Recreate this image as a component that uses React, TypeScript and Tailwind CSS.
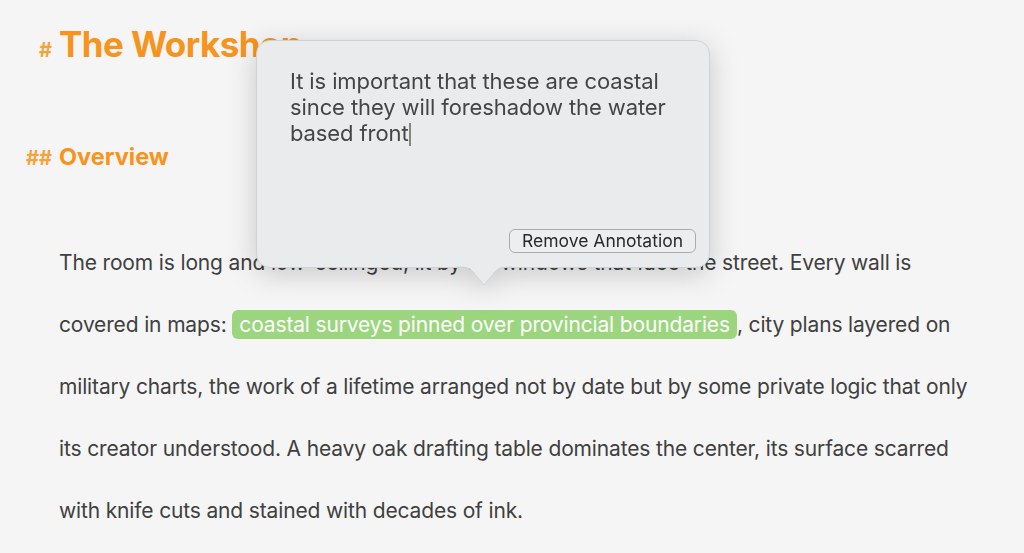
import React from "react";

export default function App() {
  const font = { fontFamily: "Inter, 'Noto Sans', sans-serif" } as React.CSSProperties;
  return (
    <div className="relative w-[1024px] h-[553px] overflow-hidden bg-[#f5f5f5] text-[#404040]" style={font}>
      <div className="pt-[22px]">
        <div className="flex items-baseline">
          <span className="w-[59px] shrink-0 pr-[7px] text-right text-[20px] font-bold text-[#f5a33a]">#</span>
          <h1 className="text-[35px] font-bold leading-[44px] text-[#f7941d] tracking-[-0.6px]">The Workshop</h1>
        </div>
        <div className="mt-[76px] flex items-baseline">
          <span className="w-[59px] shrink-0 pr-[7px] text-right text-[20px] font-bold text-[#f5a33a]">##</span>
          <h2 className="text-[23.5px] font-bold leading-[30px] text-[#f7941d]">Overview</h2>
        </div>
        <p className="mt-[59px] w-[990px] pl-[59px] pr-[10px] text-[21px] leading-[62px] tracking-[-0.15px]">
          The room is long and low-ceilinged, lit by tall windows that face the street. Every wall is covered in maps:{" "}
          <span className="rounded-[6px] bg-[#9bd67e] px-[7px] py-[2px] text-white">coastal surveys pinned over provincial boundaries</span>
          , city plans layered on military charts, the work of a lifetime arranged not by date but by some private logic that only its creator understood. A heavy oak drafting table dominates the center, its surface scarred with knife cuts and stained with decades of ink.
        </p>
      </div>

      <div className="absolute left-[256px] top-[40px] w-[454px] h-[228px] drop-shadow-[0_6px_14px_rgba(0,0,0,0.18)]">
        <div className="relative flex h-full flex-col rounded-[14px] border border-[#cfd1d3] bg-[#e9ebed] pl-[33px] pr-[34px] pt-[27px] pb-[14px]">
          <div className="text-[22px] leading-[26px] text-[#454545] tracking-[-0.1px]">
            It is important that these are coastal since they will foreshadow the water based front
            <span className="ml-[1px] inline-block h-[23px] w-[2px] bg-[#8a857c] align-[-5px]"></span>
          </div>
          <div className="mt-auto flex justify-end">
            <button className="-mr-[21px] rounded-[6px] border border-[#a9abad] bg-[#eceef0] px-[12px] h-[24px] text-[17.5px] leading-[20px] text-[#2a2a2a]">
              Remove Annotation
            </button>
          </div>
          <svg className="absolute left-[199px] -bottom-[20px]" width="56" height="21" viewBox="0 0 56 21">
            <path d="M0 0 C10 0 14 2 18 7 L28 19 L38 7 C42 2 46 0 56 0 Z" fill="#e9ebed" />
            <path d="M0 0.5 C10 0.5 14 2 18 7 L28 19 L38 7 C42 2 46 0.5 56 0.5" fill="none" stroke="#cfd1d3" strokeWidth="1" />
            <rect x="0" y="-1" width="56" height="1.5" fill="#e9ebed" />
          </svg>
        </div>
      </div>
    </div>
  );
}
